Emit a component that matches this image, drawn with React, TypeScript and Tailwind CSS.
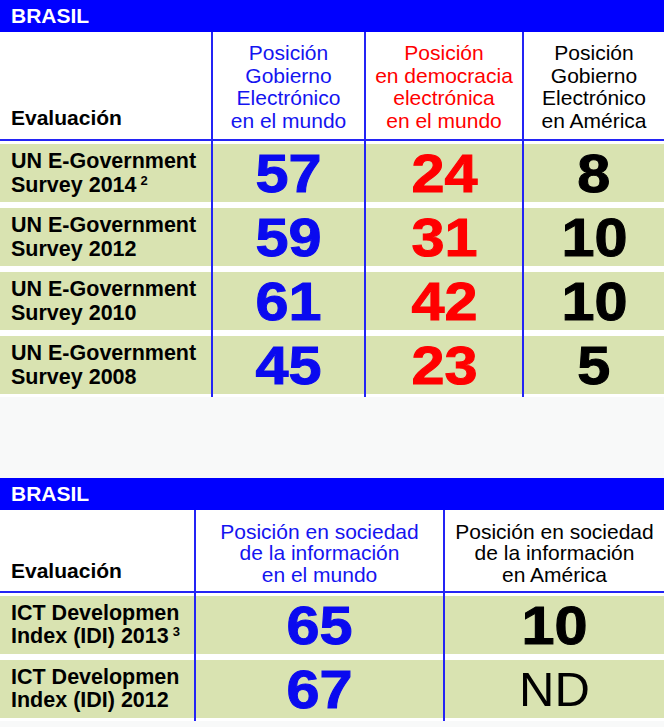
const font = { fontFamily: '"Liberation Sans", Arial, sans-serif' }

type Row = { label: string; year: string; sup?: string; values: { v: string; color: string; bold?: boolean }[] }

const BLUE = 'text-[#0a0aef]'
const RED = 'text-[#ff0000]'
const BLACK = 'text-black'

const rows1: Row[] = [
  { label: 'UN E-Government', year: 'Survey 2014', sup: '2', values: [{ v: '57', color: BLUE }, { v: '24', color: RED }, { v: '8', color: BLACK }] },
  { label: 'UN E-Government', year: 'Survey 2012', values: [{ v: '59', color: BLUE }, { v: '31', color: RED }, { v: '10', color: BLACK }] },
  { label: 'UN E-Government', year: 'Survey 2010', values: [{ v: '61', color: BLUE }, { v: '42', color: RED }, { v: '10', color: BLACK }] },
  { label: 'UN E-Government', year: 'Survey 2008', values: [{ v: '45', color: BLUE }, { v: '23', color: RED }, { v: '5', color: BLACK }] },
]

const rows2: Row[] = [
  { label: 'ICT Developmen', year: 'Index (IDI) 2013', sup: '3', values: [{ v: '65', color: BLUE }, { v: '10', color: BLACK }] },
  { label: 'ICT Developmen', year: 'Index (IDI) 2012', values: [{ v: '67', color: BLUE }, { v: 'ND', color: BLACK, bold: false }] },
]

function Bar() {
  return (
    <div className="flex h-[32px] items-center bg-[#0000ff] pl-[11px] text-[21px] font-bold text-white">BRASIL</div>
  )
}

function Num({ v, color, bold = true }: { v: string; color: string; bold?: boolean }) {
  if (!bold) {
    return <span className={`text-[49px] leading-none ${color}`}>{v}</span>
  }
  return (
    <span
      className={`inline-block scale-x-[1.12] text-[53px] font-bold leading-none [-webkit-text-stroke:1px_currentColor] ${color}`}
    >
      {v}
    </span>
  )
}

function BodyRow({ row, cols, leading }: { row: Row; cols: string; leading: string }) {
  return (
    <div className={`grid ${cols}`}>
      <div className="bg-white py-[3px]">
        <div className={`flex h-[58px] flex-col justify-center bg-[#d9e3b1] pl-[11px] text-[21.5px] font-bold text-black ${leading}`}>
          <div>{row.label}</div>
          <div>
            {row.year}
            {row.sup && <span className="relative top-[-7px] ml-[4px] text-[13px] leading-none">{row.sup}</span>}
          </div>
        </div>
      </div>
      {row.values.map((c, i) => (
        <div key={i} className="border-l-2 border-[#2424f5] bg-white py-[3px]">
          <div className="flex h-[58px] items-center justify-center bg-[#d9e3b1]">
            <Num {...c} />
          </div>
        </div>
      ))}
    </div>
  )
}

export default function App() {
  return (
    <div className="min-h-[727px] w-[664px] bg-[#f8f9f9]" style={font}>
      {/* tabla 1 */}
      <div className="bg-white">
        <Bar />
        <div className="grid h-[109px] grid-cols-[211px_153px_158px_142px] border-b-2 border-[#2424f5] text-[21px] leading-[22.5px]">
          <div className="flex items-end pb-[9px] pl-[11px] font-bold leading-[24px]">Evaluación</div>
          <div className="flex items-end justify-center border-l-2 border-[#2424f5] pb-[7px] text-center text-[#1414f0]">
            Posición
            <br />
            Gobierno
            <br />
            Electrónico
            <br />
            en el mundo
          </div>
          <div className="flex items-end justify-center border-l-2 border-[#2424f5] pb-[7px] text-center text-[#ff0000]">
            Posición
            <br />
            en democracia
            <br />
            electrónica
            <br />
            en el mundo
          </div>
          <div className="flex items-end justify-center border-l-2 border-[#2424f5] pb-[7px] text-center text-black">
            Posición
            <br />
            Gobierno
            <br />
            Electrónico
            <br />
            en América
          </div>
        </div>
        {rows1.map((r, i) => (
          <BodyRow key={i} row={r} cols="grid-cols-[211px_153px_158px_142px]" leading="leading-[24px]" />
        ))}
      </div>

      <div className="h-[81px]" />

      {/* tabla 2 */}
      <div className="bg-white">
        <Bar />
        <div className="grid h-[83px] grid-cols-[194px_249px_221px] border-b-2 border-[#2424f5] text-[21px] leading-[21.3px]">
          <div className="flex items-end pb-[8px] pl-[11px] font-bold leading-[24px]">Evaluación</div>
          <div className="flex items-end justify-center border-l-2 border-[#2424f5] pb-[6px] text-center text-[#1414f0]">
            Posición en sociedad
            <br />
            de la información
            <br />
            en el mundo
          </div>
          <div className="flex items-end justify-center border-l-2 border-[#2424f5] pb-[6px] text-center text-black">
            Posición en sociedad
            <br />
            de la información
            <br />
            en América
          </div>
        </div>
        {rows2.map((r, i) => (
          <BodyRow key={i} row={r} cols="grid-cols-[194px_249px_221px]" leading="leading-[23px]" />
        ))}
      </div>
    </div>
  )
}
